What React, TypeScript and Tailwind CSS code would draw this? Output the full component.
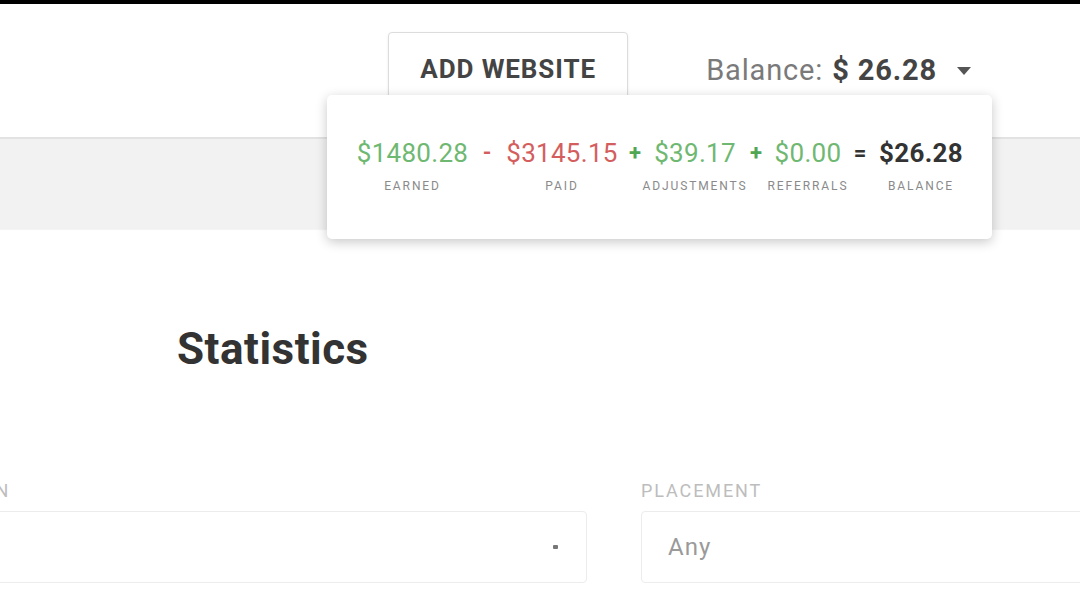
const font = { fontFamily: "Roboto, 'Liberation Sans', sans-serif" };

type Part = {
  value: string;
  label: string;
  width: string;
  tone: string;
};

const parts: Part[] = [
  { value: "$1480.28", label: "EARNED", width: "w-[121px]", tone: "text-[#6fb872]" },
  { value: "$3145.15", label: "PAID", width: "w-[122px]", tone: "text-[#d45e5e]" },
  { value: "$39.17", label: "ADJUSTMENTS", width: "w-[96px]", tone: "text-[#6fb872]" },
  { value: "$0.00", label: "REFERRALS", width: "w-[78px]", tone: "text-[#6fb872]" },
  { value: "$26.28", label: "BALANCE", width: "w-[96px]", tone: "text-[#333] font-bold" },
];

const ops = [
  { sign: "-", width: "w-[28px]", tone: "text-[#d45e5e]" },
  { sign: "+", width: "w-[24px]", tone: "text-[#4fa653]" },
  { sign: "+", width: "w-[26px]", tone: "text-[#4fa653]" },
  { sign: "=", width: "w-[26px]", tone: "text-[#333]" },
];

function BalancePopover() {
  return (
    <div className="absolute left-[327px] top-[91px] z-20 h-[144px] w-[665px] rounded-[5px] bg-white pl-[25px] pt-[42px] shadow-[0_3px_12px_rgba(0,0,0,0.22)]">
      <div className="flex items-start">
        {parts.map((p, i) => (
          <div key={p.label} className="flex items-start">
            <div className={`flex flex-col items-center ${p.width}`}>
              <span className={`whitespace-nowrap text-[26px] leading-[32px] tracking-[0.3px] ${p.tone}`}>
                {p.value}
              </span>
              <span className="mt-[10px] whitespace-nowrap text-[12px] leading-[14px] tracking-[1.9px] text-[#8a8a8a]">
                {p.label}
              </span>
            </div>
            {ops[i] && (
              <span
                className={`text-center text-[22px] font-bold leading-[32px] ${ops[i].width} ${ops[i].tone}`}
              >
                {ops[i].sign}
              </span>
            )}
          </div>
        ))}
      </div>
    </div>
  );
}

function Header() {
  return (
    <div className="relative h-[133px] bg-white">
      <div className="flex items-start justify-end pr-[108px] pt-[28px]">
        <button
          type="button"
          className="h-[72px] w-[240px] rounded-[4px] border border-[#dcdcdc] bg-white pt-[2px] text-[26px] font-bold tracking-[0.9px] text-[#444] shadow-[0_1px_3px_rgba(0,0,0,0.08)]"
        >
          ADD WEBSITE
        </button>
        <div className="ml-[78px] flex items-center pt-[20px]">
          <span className="text-[29px] leading-[36px] tracking-[0.85px] text-[#7a7a7a]">Balance:</span>
          <span className="ml-[9px] text-[29px] font-bold leading-[36px] tracking-[0.85px] text-[#444]">
            $ 26.28
          </span>
          <svg width="16" height="10" viewBox="0 0 16 10" className="ml-[19px] mt-[2px]">
            <path d="M1 1h14l-7 8z" fill="#555" />
          </svg>
        </div>
      </div>
      <BalancePopover />
    </div>
  );
}

function Field({ label, value, caret }: { label: string; value: string; caret?: boolean }) {
  return (
    <div className="flex flex-col">
      <span className="text-[18px] leading-[22px] tracking-[1.9px] text-[#bdbdbd]">{label}</span>
      <div className="mt-[9px] flex h-[72px] items-center justify-between rounded-[4px] border border-[#ececec] bg-white pl-[26px] pr-[28px]">
        <span className="text-[24px] tracking-[1px] text-[#9a9a9a]">{value}</span>
        {caret && <span className="h-[4px] w-[5px] rounded-[1px] bg-[#777]" />}
      </div>
    </div>
  );
}

export default function App() {
  return (
    <div style={font} className="h-[599px] w-[1080px] overflow-hidden bg-white">
      <div className="h-[4px] bg-black" />
      <Header />
      <div className="h-[92px] border-t-2 border-[#e2e2e2] bg-[#f2f2f2] shadow-[0_1px_1px_rgba(0,0,0,0.04)]" />
      <div className="pl-[177px] pt-[96px]">
        <h1 className="text-[44px] font-bold leading-[48px] tracking-[0.5px] text-[#333]">Statistics</h1>
      </div>
      <div className="ml-[-96px] mt-[107px] grid w-[1400px] grid-cols-[683px_683px] gap-x-[54px]">
        <Field label="CAMPAIGN" value="" caret />
        <Field label="PLACEMENT" value="Any" />
      </div>
    </div>
  );
}
